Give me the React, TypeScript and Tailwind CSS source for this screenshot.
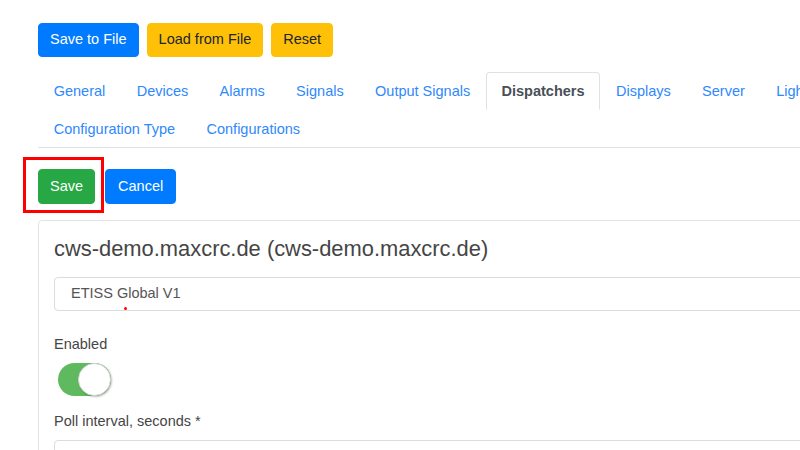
import React from "react";

const tabsTop = ["General", "Devices", "Alarms", "Signals", "Output Signals", "Dispatchers", "Displays", "Server", "Lights"];
const tabsBottom = ["Configuration Type", "Configurations"];

function Tab({ label, active }: { label: string; active?: boolean }) {
  return (
    <li
      className={
        active
          ? "h-[37.5px] pt-[3px] flex items-center px-[14.7px] border border-[#dee2e6] border-b-white rounded-t-[4px] text-[#495057] font-bold"
          : "h-[37.5px] pt-[3px] flex items-center px-[14.7px] border border-transparent text-[#2f88fc]"
      }
    >
      {label}
    </li>
  );
}

export default function App() {
  return (
    <div className="w-[800px] h-[450px] overflow-hidden bg-white pl-[38px] pt-[23px] font-['Liberation_Sans',Arial,sans-serif] text-[14.5px] leading-[21.6px] text-[#454545]">
      {/* top actions */}
      <div className="flex gap-2">
        <button className="h-[34px] px-[11px] border border-[#007bff] bg-[#007bff] text-white rounded-[4px]">
          Save to File
        </button>
        <button className="h-[34px] px-[11px] border border-[#ffc107] bg-[#ffc107] text-[#212529] rounded-[4px]">
          Load from File
        </button>
        <button className="h-[34px] px-[11px] border border-[#ffc107] bg-[#ffc107] text-[#212529] rounded-[4px]">
          Reset
        </button>
      </div>

      {/* tabs */}
      <ul className="mt-[15px] w-[860px] flex flex-wrap border-b border-[#dee2e6]">
        {tabsTop.map((t) => (
          <Tab key={t} label={t} active={t === "Dispatchers"} />
        ))}
        {tabsBottom.map((t) => (
          <Tab key={t} label={t} />
        ))}
      </ul>

      {/* save / cancel */}
      <div className="mt-[21px] flex gap-[10px]">
        <div className="relative">
          <button className="h-[35px] px-[11px] border border-[#28a745] bg-[#28a745] text-white rounded-[4px]">
            Save
          </button>
          <div className="absolute -left-[15px] -right-[9px] -top-[12px] -bottom-[9px] border-[3px] border-[#ff0000]" />
        </div>
        <button className="h-[35px] px-[12px] border border-[#007bff] bg-[#007bff] text-white rounded-[4px]">
          Cancel
        </button>
      </div>

      {/* card */}
      <div className="mt-[16px] w-[860px] border border-[#e3e3e3] rounded-[4px] p-[15px]">
        <h4 className="text-[21.9px] leading-[26px] text-[#454545]">
          cws-demo.maxcrc.de (cws-demo.maxcrc.de)
        </h4>

        <div className="relative mt-[15px] h-[34px] border border-[#dcdcdc] rounded-[4px] px-4 flex items-center text-[#555]">
          ETISS Global V1
          <span className="absolute left-[69px] top-[29px] w-[3px] h-[3px] rounded-full bg-[#ff0000]" />
        </div>

        <div className="mt-[23px]">Enabled</div>
        <div className="mt-[7px] ml-[4px] relative w-[53px] h-[33px] rounded-full bg-[#5fba5f]">
          <span className="absolute right-0 top-0 w-[33px] h-[33px] rounded-full bg-white border border-[#d6d6d6] shadow-[1px_1px_2px_rgba(0,0,0,0.25)]" />
        </div>

        <div className="mt-[15px]">Poll interval, seconds *</div>
        <div className="mt-[8px] h-[34px] border border-[#dcdcdc] rounded-[4px]" />
      </div>
    </div>
  );
}
